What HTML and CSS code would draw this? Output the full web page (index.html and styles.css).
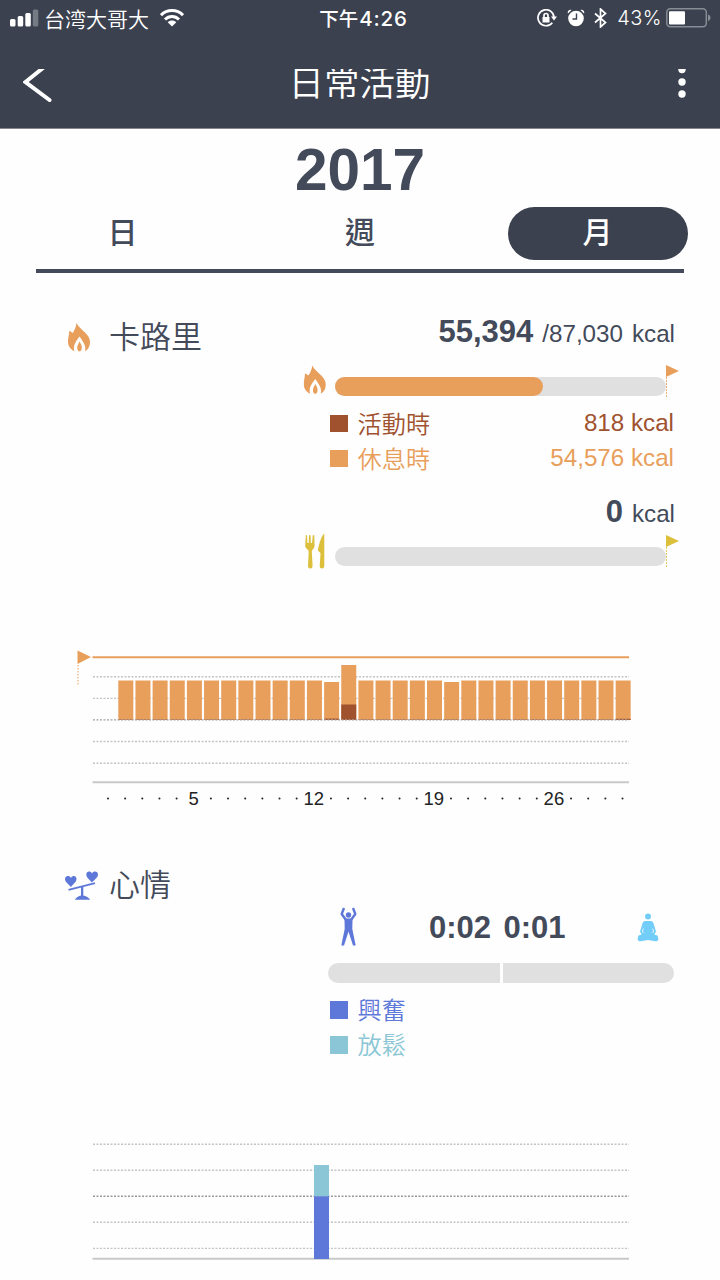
FILE: index.html
```html
<!DOCTYPE html>
<html lang="zh-Hant">
	<head>
		<meta charset="utf-8">
		<title>日常活動</title>
		<link rel="stylesheet" href="styles.css">
		<script>
			var START = 125.8;
			var STEP = 17.15;

			function rect(x,y,w,h,cls){
				return `<rect class="${cls}" x="${x}" y="${y}" width="${w}" height="${h}"/>`;
			}

			function drawCalories(){
				var base = 80;
				var str = "";
				for(var i=0;i<30;i++){
					// resting + active height of one day
					var total = 39.5;
					var active = 0.5;
					if(i==12){ total = 38; active = 1.4; }
					if(i==13){ total = 55; active = 15.5; }
					if(i==19){ total = 38; }
					if(i==29){ active = 1.2; }
					var x = START - 7.5 + i*STEP;
					str += rect(x,base-total,15,total,"rest");
					str += rect(x,base-active,15,active,"active");
				}
				document.querySelector("#calBars").innerHTML = str;
			}

			function drawDays(){
				var str = "";
				for(var i=0;i<=30;i++){
					var x = 108 + i*STEP;
					if(i%7==5){
						str += `<text x="${x}" y="165">${i}</text>`;
					} else {
						str += `<circle cx="${x}" cy="158.5" r="1"/>`;
					}
				}
				document.querySelector("#days").innerHTML = str;
			}

			function draw(){
				drawCalories();
				drawDays();
			}
		</script>
	</head>
	<body onload="draw();">
		<svg class="symbols">
			<symbol id="flame" viewBox="0 0 22 29">
				<path d="M8.500 0C10 3.500 14 6.500 17.500 10C20.500 13 22 15.500 22 19.500C22 23.500 20 26.500 17 28.200C18.500 23 15 18.500 11.500 13.500C8 18 4.700 22.500 6.300 28.200C2.500 26.500 0 23 0 18.500C0 14.500 1.300 12 1.200 8C2.500 8.300 3.800 9.200 4.600 10C6.500 7.500 8 4 8.500 0Z"/>
				<path d="M11.500 18.500C13 21 14 22.800 13.800 25C13.700 26.800 13 28 11.600 28.600C10 28 9.200 26.700 9.200 25C9.200 22.700 10.400 21 11.500 18.500Z"/>
			</symbol>
		</svg>
		<div class="header">
			<div class="status">
				<div class="side">
					<svg class="signal" width="29" height="18" viewBox="0 0 29 18">
						<rect x="0" y="10" width="5.500" height="7.500" rx="1.500"/>
						<rect x="7.700" y="7" width="5.500" height="10.500" rx="1.500"/>
						<rect x="15.300" y="4" width="5.500" height="13.500" rx="1.500"/>
						<rect class="off" x="22.800" y="0.500" width="5.500" height="17" rx="1.500"/>
					</svg>
					<span class="carrier">台湾大哥大</span>
					<svg class="wifi" width="24" height="18" viewBox="0 0 24 18">
						<path class="line" d="M1 6.200C7 0 17 0 23 6.200"/>
						<path class="line" d="M5 10.500C9 6.500 15 6.500 19 10.500"/>
						<path d="M7.700 13.200C10 11 14 11 16.300 13.200L12 17.500Z"/>
					</svg>
				</div>
				<div class="clock">下午<span>4:26</span></div>
				<div class="side right">
					<svg class="lock" width="20" height="18" viewBox="0 0 20 18">
						<path class="line" d="M15.300 13.700A8 8 0 1 1 17 9"/>
						<path d="M14 7.500H20L17 11.500Z"/>
						<rect x="5.500" y="8" width="7" height="5.500"/>
						<path class="line" d="M7 8V6.500A2 2 0 0 1 11 6.500V8"/>
					</svg>
					<svg class="alarm" width="18" height="18" viewBox="0 0 18 18">
						<circle cx="9" cy="9.500" r="7.800"/>
						<path d="M1 4.500L4.500 1C2.500 -0.200 -0.200 2.500 1 4.500ZM17 4.500L13.500 1C15.500 -0.200 18.200 2.500 17 4.500Z"/>
						<path class="hand" d="M9.500 4.500V10H5.500"/>
					</svg>
					<svg class="bt" width="13" height="20" viewBox="0 0 13 20">
						<path class="line" d="M1 5.500L11.500 14.500L6.500 19V1L11.500 5.500L1 14.500"/>
					</svg>
					<span class="percent">43%</span>
					<svg class="battery" width="45" height="20" viewBox="0 0 45 20">
						<rect class="case" x="0.800" y="0.800" width="39.500" height="18" rx="3.500"/>
						<rect x="3" y="3.200" width="16" height="13.300" rx="1"/>
						<path class="cap" d="M42 6.500C45.300 7 45.300 12.500 42 13Z"/>
					</svg>
				</div>
			</div>
			<div class="nav">
				<svg class="back" width="30" height="34" viewBox="0 0 30 34">
					<path d="M20 -1L2.500 13L26.500 31"/>
				</svg>
				<h1>日常活動</h1>
				<svg class="more" width="10" height="34" viewBox="0 0 10 34">
					<circle cx="5" cy="0.500" r="3.700"/>
					<circle cx="5" cy="13" r="3.700"/>
					<circle cx="5" cy="25" r="3.700"/>
				</svg>
			</div>
		</div>

		<div class="year">2017</div>
		<div class="tabs">
			<div class="tab">日</div>
			<div class="tab">週</div>
			<div class="tab selected">月</div>
		</div>

		<div class="section calories">
			<div class="title">
				<svg class="small-flame" width="22" height="29"><use href="#flame"/></svg>
				<h2>卡路里</h2>
			</div>
			<div class="panel">
				<div class="value"><b>55,394</b> <span>/87,030 kcal</span></div>
				<div class="meter burned">
					<svg class="icon" width="23" height="36" viewBox="0 0 23 36"><use href="#flame" x="0.500" y="0.500" width="22.500" height="29"/></svg>
					<div class="track"><div class="fill" style="width:62.7%"></div></div>
					<div class="flag"></div>
				</div>
				<div class="legend brown"><i></i><span>活動時</span><em>818 kcal</em></div>
				<div class="legend orange"><i></i><span>休息時</span><em>54,576 kcal</em></div>
				<div class="value eaten"><b>0</b> <span>kcal</span></div>
				<div class="meter food">
					<svg class="icon" width="23" height="36" viewBox="-1 0 23 36">
						<path d="M1.800 2.500Q2.500 1.500 3 2.500L3.400 10H4.700L5 2.500Q5.800 1.500 6.600 2.500L6.800 10H8.100L8.700 2.500Q9.500 1.500 10.300 2.500L10.600 13C10.600 15.500 7.800 16.500 7.800 18.500L8.600 33Q8.500 35.500 6.300 35.500Q4 35.500 4 33L4.700 18.500C4.700 16.500 1.300 15.500 1.200 13Z"/>
						<path d="M20.300 0.500V33Q20.200 35.500 18 35.500Q15.700 35.500 15.700 33L16.500 20.500C15.800 18.200 13.500 18.500 14 16C15.500 10.500 17 3 20.300 0.500Z"/>
					</svg>
					<div class="track"></div>
					<div class="flag"></div>
				</div>
			</div>
		</div>

		<svg class="chart" width="720" height="180" viewBox="0 0 720 180">
			<path class="orange-flag" d="M77.500 10.500L91 17L77.500 24Z"/>
			<path class="pole" d="M78 25V46"/>
			<path class="grid" d="M93 36.800H629M93 58.400H629M93 101.500H629M93 123.200H629"/>
			<g id="calBars"></g>
			<path class="grid mid" d="M93 79.900H629"/>
			<path class="goal" d="M92.500 17.300H629"/>
			<path class="axis" d="M92.500 142.300H629"/>
			<g id="days"></g>
		</svg>

		<div class="section mood">
			<div class="title">
				<svg class="balance" width="34" height="30" viewBox="0 0 34 30">
					<path d="M6 16C3 12.500 0 11 0 8C0 4.500 4.500 4 6 7C7.500 4 11.500 4.500 11.500 8C11.500 11 8.500 12.500 6 16Z"/>
					<path d="M27 11.500C24 8 21.300 6.500 21.300 3.500C21.300 0 25.500 -0.500 27 2.500C28.500 -0.500 33 0 33 3.500C33 6.500 30 8 27 11.500Z"/>
					<path class="beam" d="M3.500 18.800L30 12.200"/>
					<path d="M16 16H18.300V24.500C20.500 25.200 23.500 26 25.200 28.800H9.800C11.500 26 14 25.200 16 24.500Z"/>
				</svg>
				<h2>心情</h2>
			</div>
			<div class="panel">
				<div class="times">
					<svg class="excited" width="17" height="40" viewBox="0 0 17 40">
						<circle cx="8.500" cy="8" r="2.700"/>
						<path class="arms" d="M4 1L1.700 7L6 13M13 1L15.300 7L11 13"/>
						<path d="M4.500 11.500H12.500L12.300 22L15.700 38.500H13L8.500 24.500L4 38.500H1.300L4.700 22Z"/>
					</svg>
					<b>0:02</b><b>0:01</b>
					<svg class="relaxed" width="22" height="30" viewBox="0 0 22 30">
						<circle cx="11" cy="3.500" r="3"/>
						<path d="M8 8H14C16 8.500 16.500 10 17 12L19 18.500L17.300 21.500C20 22 21.300 22.700 21 24.500C22 26.500 21 28.500 18.500 28.200L11 27L3.500 28.200C1 28.500 0 26.500 1 24.500C0.700 22.700 2 22 4.700 21.500L3 18.500L5 12C5.500 10 6 8.500 8 8Z"/>
						<path class="gap" d="M6.300 15.500L5.500 18L6.300 20M15.700 15.500L16.500 18L15.700 20"/>
					</svg>
				</div>
				<div class="halves"><div></div><div></div></div>
				<div class="legend blue"><i></i><span>興奮</span></div>
				<div class="legend teal"><i></i><span>放鬆</span></div>
			</div>
		</div>

		<svg class="chart" width="720" height="150" viewBox="0 0 720 150">
			<path class="grid" d="M93 14.200H629M93 40.200H629M93 92.300H629M93 118.400H629"/>
			<path class="grid dark" d="M93 66.300H629"/>
			<path class="axis" d="M92.500 128.800H629"/>
			<rect class="relax" x="314" y="35" width="15" height="31.500"/>
			<rect class="excite" x="314" y="66.300" width="15" height="62.700"/>
		</svg>
	</body>
</html>
```
FILE: styles.css
```css
body{
	margin:0;
	width:720px;
	height:1280px;
	overflow:hidden;
	background-color:#fefefe;
	color:#434a5a;
	font-family:"Liberation Sans","Noto Sans CJK TC",sans-serif;
}
h1,h2{
	margin:0;
	font-weight:350;
}
svg{
	display:block;
	flex:none;
}
.symbols{
	width:0;
	height:0;
	position:absolute;
}
.header{
	height:128px;
	background-color:#3b414f;
	border-bottom:1px solid #85878e;
	color:#fff;
	fill:#fff;
}
.status{
	display:flex;
	align-items:center;
	height:36px;
	padding:0 9px 0 10px;
	font-size:20px;
}
.status .line{
	fill:none;
	stroke:#fff;
	stroke-width:1.7;
}
.side{
	display:flex;
	align-items:center;
	flex:1;
}
.right{
	justify-content:flex-end;
}
.signal .off{
	fill:#767a84;
}
.carrier{
	margin:-1px 11px 0 5px;
	font-size:21px;
	font-weight:350;
	font-family:"Noto Sans CJK TC",sans-serif;
}
.status .wifi .line{
	stroke-width:3;
}
.clock{
	margin:1px 0 0 6px;
	font-family:Inter,"Noto Sans CJK TC",sans-serif;
	font-weight:500;
	font-size:19.5px;
	line-height:26px;
}
.clock span{
	margin-left:1px;
	font-size:20.5px;
	letter-spacing:0.8px;
}
.alarm{
	margin:0 9px 0 10px;
}
.alarm .hand{
	fill:none;
	stroke:#3b414f;
	stroke-width:1.4;
}
.percent{
	margin:0 4px 0 10px;
	font-family:Inter,sans-serif;
	font-weight:300;
	letter-spacing:0.4px;
}
.battery .case{
	fill:none;
	stroke:#888c95;
	stroke-width:1.5;
}
.battery .cap{
	fill:#888c95;
}
/* the title row is cut off along its top edge */
.nav{
	display:flex;
	justify-content:space-between;
	height:40px;
	margin-top:33px;
	padding:0 33px 0 23px;
	overflow:hidden;
}
.nav h1{
	margin-left:-11px;
	font-size:35.5px;
	line-height:31px;
}
.back path{
	fill:none;
	stroke:#fff;
	stroke-width:4;
	stroke-linecap:round;
}
.year{
	height:78px;
	line-height:82px;
	text-align:center;
	font-size:58.5px;
	font-weight:bold;
}
.tabs{
	display:flex;
	justify-content:space-between;
	margin:0 32.5px;
}
.tab{
	width:180px;
	height:53px;
	line-height:52px;
	border-radius:27px;
	text-align:center;
	font-size:30px;
	font-weight:500;
}
.tab.selected{
	background-color:#3b414f;
	color:#fff;
}
.section{
	display:flex;
	justify-content:space-between;
	padding:0 46px 0 65px;
}
.calories{
	position:relative;
	height:362px;
	margin-top:9px;
	padding-top:9px;
}
.calories:before{
	content:"";
	position:absolute;
	left:36px;
	top:0;
	width:648px;
	height:4px;
	background-color:#434a5a;
}
.title{
	display:flex;
	align-items:center;
	height:32px;
}
.title h2{
	font-size:31px;
	line-height:32px;
}
.calories .title{
	margin-top:44px;
}
.small-flame{
	margin:-2px 19px 0 3px;
	fill:#e99f5c;
}
.panel{
	width:346px;
}
.value{
	height:36px;
	margin:36px -1px 0 -20px;
	line-height:36px;
	text-align:right;
	font-size:24.2px;
	word-spacing:2.3px;
	white-space:nowrap;
}
.value b{
	font-size:31px;
}
.meter{
	display:flex;
	align-items:flex-end;
	position:relative;
	height:36px;
	margin:15px 0 5px -25px;
	padding-right:8px;
}
.icon{
	margin-right:9px;
}
.track{
	flex:1;
	height:19.5px;
	margin-bottom:5px;
	border-radius:10px;
	background-color:#e0e0e0;
}
.fill{
	height:100%;
	border-radius:10px;
	background-color:#e99f5c;
}
.flag{
	position:absolute;
	left:363px;
	top:0;
	width:13px;
	height:12px;
	background-color:currentColor;
	clip-path:polygon(0 0,100% 50%,0 100%);
}
.meter:after{
	content:"";
	position:absolute;
	left:363px;
	top:12px;
	width:1px;
	height:20px;
	opacity:0.8;
	background:repeating-linear-gradient(currentColor 0 2px,transparent 2px 3px);
}
.burned{
	color:#e99f5c;
	fill:#e99f5c;
}
.food{
	margin-top:5px;
	color:#dcc03c;
	fill:#dcc03c;
}
.food .icon{
	margin-bottom:2px;
}
.legend{
	display:flex;
	align-items:center;
	height:35px;
	padding-left:2px;
	font-size:24.2px;
	font-weight:350;
}
.legend i{
	width:17.5px;
	height:17.5px;
	margin-right:10px;
	background-color:currentColor;
}
.legend span{
	margin-top:-3px;
}
.legend em{
	margin:-2px 0 0 auto;
	font-style:normal;
}
.brown{
	color:#a0522f;
}
.orange{
	color:#e99f5c;
}
.blue{
	color:#5d78d8;
}
.teal{
	color:#8ac6d5;
}
.eaten{
	margin-top:18px;
}
.chart .grid{
	fill:none;
	stroke:#c4c4c4;
	stroke-width:1.4;
	stroke-dasharray:2 1.5;
}
.chart .mid{
	stroke:#a5a09c;
}
.chart .dark{
	stroke:#999;
}
.goal{
	stroke:#e99f5c;
	stroke-width:2;
}
.axis{
	stroke:#c8c9c9;
	stroke-width:2;
}
.orange-flag,.rest{
	fill:#e99f5c;
}
.pole{
	stroke:#e99f5c;
	stroke-dasharray:1.5 1.5;
}
.active{
	fill:#a0522f;
}
.relax{
	fill:#8ac6d5;
}
.excite{
	fill:#5d78d8;
}
#days{
	fill:#222;
	font-size:18.5px;
	text-anchor:middle;
}
.mood{
	height:260px;
	margin-top:50px;
}
.balance{
	margin-right:10px;
	fill:#5d78d8;
}
.beam{
	stroke:#5d78d8;
	stroke-width:1.8;
}
.times{
	display:flex;
	align-items:center;
	height:40px;
	margin-top:37px;
	padding:0 15px 0 12px;
}
.times b{
	padding-top:2px;
	font-size:31px;
}
.times b + b{
	margin-left:12.5px;
}
.excited{
	margin-right:72px;
	fill:#5d78d8;
}
.arms{
	fill:none;
	stroke:#5d78d8;
	stroke-width:2.4;
	stroke-linejoin:round;
}
.relaxed{
	margin:2px 0 0 auto;
	fill:#73cdf9;
}
.gap{
	fill:none;
	stroke:#fefefe;
	stroke-width:0.8;
}
.halves{
	display:flex;
	gap:3px;
	height:19.5px;
	margin:16px 0 10px;
}
.halves div{
	flex:1;
	background-color:#e0e0e0;
	border-radius:10px 0 0 10px;
}
.halves div + div{
	border-radius:0 10px 10px 0;
}
```
